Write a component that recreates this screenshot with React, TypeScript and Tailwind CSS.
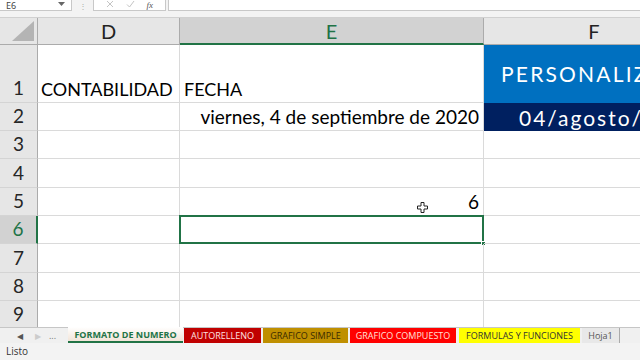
import React from "react";

const font = { fontFamily: "Lato, 'Noto Sans', sans-serif" };

function RowHead({ n, h, sel }: { n: number; h: number; sel?: boolean }) {
  return (
    <div
      className={`w-[38px] shrink-0 flex items-end justify-center border-b border-[#d4d4d4] ${
        sel
          ? "bg-[#d2d2d2] text-[#217346] border-r-2 border-r-[#217346]"
          : "bg-[#e6e6e6] text-[#262626] border-r border-r-[#ababab]"
      } text-[19px] leading-none pb-[5px]`}
      style={{ height: h }}
    >
      {n}
    </div>
  );
}

export default function App() {
  const rows: { n: number; h: number }[] = [
    { n: 2, h: 28 },
    { n: 3, h: 28 },
    { n: 4, h: 29 },
    { n: 5, h: 28 },
    { n: 6, h: 28 },
    { n: 7, h: 29 },
    { n: 8, h: 28 },
    { n: 9, h: 28 },
  ];
  const cellCls = "border-r border-b border-[#dadada] shrink-0 relative";
  return (
    <div className="w-[640px] h-[360px] overflow-hidden bg-white flex flex-col" style={font}>
      {/* formula bar */}
      <div className="h-[18px] shrink-0 bg-[#f3f3f3] relative flex items-start border-b border-[#d0d0d0]">
        <div className="w-[72px] h-[11px] bg-white border-r border-b border-[#c8c8c8] flex items-center justify-between px-[6px] text-[9px] text-[#444]" style={{ fontFamily: "'Noto Sans', sans-serif" }}>
          <span className="leading-none">E6</span>
          <svg width="7" height="4" viewBox="0 0 7 4" className="-mt-[2px]"><path d="M0 0 L7 0 L3.5 4Z" fill="#666" /></svg>
        </div>
        <div className="w-[21px] h-[11px] flex items-center justify-center text-[#aaa] text-[8px] leading-none">⋮</div>
        <div className="w-[73px] h-[11px] bg-white border border-t-0 border-[#c8c8c8] flex items-center justify-around px-[6px]">
          <svg width="8" height="8" viewBox="0 0 8 8" className="-mt-[2px]"><path d="M1 1L7 7M7 1L1 7" stroke="#c4c4c4" strokeWidth="1" /></svg>
          <svg width="9" height="8" viewBox="0 0 9 8" className="-mt-[2px]"><path d="M1 4.5L3.5 7L8 1" stroke="#c4c4c4" strokeWidth="1" fill="none" /></svg>
          <span className="text-[9px] italic text-[#555] leading-none" style={{ fontFamily: "'Liberation Serif', serif" }}>fx</span>
        </div>
        <div className="flex-1 h-[11px] bg-white border-l border-b border-[#c8c8c8] ml-[2px]" />
      </div>

      {/* column headers */}
      <div className="h-[27px] shrink-0 flex">
        <div className="w-[38px] shrink-0 bg-[#e6e6e6] border-r border-b border-[#ababab] relative">
          <svg width="22" height="20" viewBox="0 0 22 20" className="absolute right-[3px] bottom-[3px]">
            <path d="M22 0 L22 20 L0 20Z" fill="#b4b4b4" />
          </svg>
        </div>
        <div className="w-[142px] shrink-0 bg-[#e6e6e6] border-r border-b border-[#ababab] flex items-end justify-center pb-[3px] text-[20px] leading-none text-[#222]">D</div>
        <div className="w-[304px] shrink-0 bg-[#d2d2d2] border-r border-[#ababab] border-b-2 border-b-[#217346] flex items-end justify-center pb-[2px] text-[20px] leading-none text-[#217346]">E</div>
        <div className="w-[220px] shrink-0 bg-[#e6e6e6] border-b border-[#ababab] flex items-end justify-center pb-[3px] text-[20px] leading-none text-[#222]">F</div>
      </div>

      {/* grid */}
      <div className="flex-1 overflow-hidden">
        {/* row 1 */}
        <div className="flex h-[58px]">
          <RowHead n={1} h={58} />
          <div className={`${cellCls} w-[142px] flex items-end pl-[3px] pb-[4px] text-[18px] leading-none text-black whitespace-nowrap overflow-visible z-10`}>CONTABILIDAD</div>
          <div className={`${cellCls} w-[304px] flex items-end pl-[4px] pb-[4px] text-[18px] leading-none text-black`}>FECHA</div>
          <div className="w-[220px] shrink-0 bg-[#0070c0] border-b border-[#0070c0] flex items-center pl-[17px] text-white text-[21px] tracking-[2.2px] leading-none whitespace-nowrap overflow-hidden">PERSONALIZADO</div>
        </div>
        {rows.map((r) => (
          <div key={r.n} className="flex" style={{ height: r.h }}>
            <RowHead n={r.n} h={r.h} sel={r.n === 6} />
            <div className={`${cellCls} w-[142px]`} style={{ height: r.h }} />
            <div className={`${cellCls} w-[304px] flex items-end justify-end pr-[4px] pb-[4px] text-[19px] leading-none text-black whitespace-nowrap`} style={{ height: r.h }}>
              {r.n === 2 && "viernes, 4 de septiembre de 2020"}
              {r.n === 5 && (
                <>
                  <svg width="11" height="11" viewBox="0 0 11 11" className="absolute left-[237px] top-[14px]">
                    <path d="M4 0.5H7V4H10.5V7H7V10.5H4V7H0.5V4H4Z" fill="white" stroke="#222" strokeWidth="1" />
                  </svg>
                  <span className="text-[19px]">6</span>
                </>
              )}
              {r.n === 6 && (
                <>
                  <div className="absolute -left-[1px] -top-[1px] w-[305px] h-[29px] border-2 border-[#217346]" />
                  <div className="absolute -right-[3px] -bottom-[3px] w-[5px] h-[5px] bg-[#217346] border border-white" />
                </>
              )}
            </div>
            {r.n === 2 ? (
              <div className="w-[220px] shrink-0 bg-[#002060] flex items-center pl-[35px] text-white text-[21px] tracking-[2px] leading-none whitespace-nowrap overflow-hidden" style={{ height: r.h }}>04/agosto/2020</div>
            ) : (
              <div className={`${cellCls} w-[220px]`} style={{ height: r.h }} />
            )}
          </div>
        ))}
      </div>

      {/* sheet tabs */}
      <div className="h-[16px] shrink-0 bg-[#f0f0f0] border-t border-[#c6c6c6] flex items-stretch text-[9px] leading-none" style={{ fontFamily: "'Open Sans', sans-serif" }}>
        <div className="w-[68px] flex items-center text-[#555]">
          <span className="ml-[17px] text-[8px]">◀</span>
          <span className="ml-[12px] text-[8px] text-[#ccc]">▶</span>
          <span className="ml-[8px] text-[#777]">...</span>
        </div>
        <div className="w-[115px] flex items-center justify-center bg-gradient-to-b from-white to-[#f2e4d8] border-b-2 border-[#217346] text-[#217346] font-bold text-[9px] -mt-[1px]">FORMATO DE NUMERO</div>
        <div className="w-[77px] ml-[1px] flex items-center justify-center bg-[#c00000] text-[#ffe0e0]">AUTORELLENO</div>
        <div className="w-[85px] ml-[2px] flex items-center justify-center bg-[#bf8f00] text-[#3a2a00]">GRAFICO SIMPLE</div>
        <div className="w-[106px] ml-[2px] flex items-center justify-center bg-[#ff0000] text-[#ffe0d8]">GRAFICO COMPUESTO</div>
        <div className="w-[121px] ml-[3px] flex items-center justify-center bg-[#ffff00] text-[#333]">FORMULAS Y FUNCIONES</div>
        <div className="w-[38px] ml-[2px] flex items-center justify-center bg-[#e8e8e8] text-[#555] border-r border-[#aaa]">Hoja1</div>
        <div className="flex-1" />
      </div>

      {/* status bar */}
      <div className="h-[17px] shrink-0 bg-[#f3f3f3] flex items-center pl-[6px] text-[10px] text-[#333]" style={{ fontFamily: "'Open Sans', sans-serif" }}>
        Listo
      </div>
    </div>
  );
}
